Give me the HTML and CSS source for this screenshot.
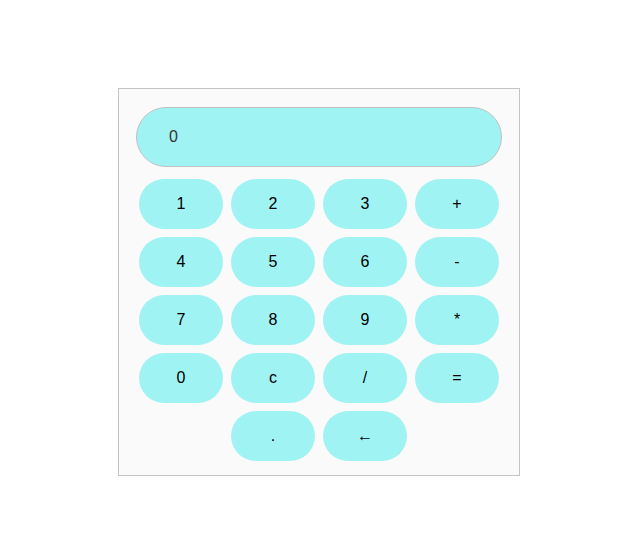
FILE: index.html
```html
<!DOCTYPE html>
<html>
<head>
<meta charset="utf-8">
<link rel="stylesheet" href="styles.css">
</head>
<body>
<div class="calc">
  <div class="display">0</div>
  <div class="keys">
    <button class="key">1</button>
    <button class="key">2</button>
    <button class="key">3</button>
    <button class="key">+</button>
    <button class="key">4</button>
    <button class="key">5</button>
    <button class="key">6</button>
    <button class="key">-</button>
    <button class="key">7</button>
    <button class="key">8</button>
    <button class="key">9</button>
    <button class="key">*</button>
    <button class="key">0</button>
    <button class="key">c</button>
    <button class="key">/</button>
    <button class="key">=</button>
    <button class="key">.</button>
    <button class="key">←</button>
  </div>
</div>
</body>
</html>
```
FILE: styles.css
```css
html, body {
  margin: 0;
  padding: 0;
  background: #ffffff;
  font-family: "Liberation Sans", Arial, sans-serif;
}
.calc {
  box-sizing: border-box;
  width: 402px;
  height: 388px;
  margin: 88px 0 0 118px;
  border: 1px solid #c4c4c4;
  background: #fafafa;
  padding: 18px 17px 14px 17px;
}
.display {
  box-sizing: border-box;
  width: 366px;
  height: 60px;
  border: 1px solid #c0c0c0;
  border-radius: 30px;
  background: #a0f3f3;
  padding-left: 32px;
  display: flex;
  align-items: center;
  font-size: 16px;
  color: #333333;
}
.keys {
  margin-top: 12px;
  width: 366px;
  padding-left: 3px;
  box-sizing: border-box;
  display: flex;
  flex-wrap: wrap;
  justify-content: center;
  column-gap: 8px;
  row-gap: 8px;
  width: 363px;
}
.key {
  width: 84px;
  height: 50px;
  border: none;
  border-radius: 25px;
  background: #a0f3f3;
  font-family: "Liberation Sans", Arial, sans-serif;
  font-size: 16px;
  color: #000000;
  padding: 0;
  margin: 0;
}
```
